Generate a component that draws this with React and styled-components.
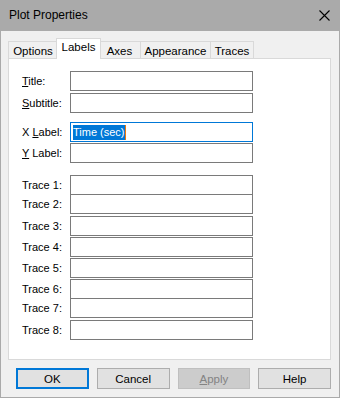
import React from 'react'
import styled, { createGlobalStyle } from 'styled-components'

const GlobalStyle = createGlobalStyle`
  html, body {
    margin: 0;
    padding: 0;
    background: #f0f0f0;
  }
  * {
    box-sizing: border-box;
  }
`

const fields = [
  { label: 'Title:', key: 'T', rest: 'itle:', space: 12 },
  { label: 'Subtitle:', key: 'S', rest: 'ubtitle:', space: 2 },
  { label: 'X Label:', pre: 'X ', key: 'L', rest: 'abel:', space: 9, value: 'Time (sec)' },
  { label: 'Y Label:', key: 'Y', rest: ' Label:', space: 1 },
]

const traces = [12, -1, 2, 1, 1, 1, -1, 2]

function App() {
  return (
    <Window>
      <GlobalStyle />
      <TitleBar>
        <span>Plot Properties</span>
        <svg width="11" height="11" viewBox="0 0 11 11">
          <path d="M0.5 0.5 L10.5 10.5 M10.5 0.5 L0.5 10.5" stroke="#000" strokeWidth="1.1" fill="none" />
        </svg>
      </TitleBar>

      <Body>
        <Tabs>
          <Tab w={50}>Options</Tab>
          <Tab w={41} active>Labels</Tab>
          <Tab w={42}>Axes</Tab>
          <Tab w={70}>Appearance</Tab>
          <Tab w={43}>Traces</Tab>
        </Tabs>

        <Panel>
          {fields.map((f) => (
            <Row key={f.label} space={f.space}>
              <Label>
                {f.pre}<u>{f.key}</u>{f.rest}
              </Label>
              <TextBox focused={!!f.value}>
                {f.value && (
                  <>
                    <Selected>{f.value}</Selected>
                    <Caret />
                  </>
                )}
              </TextBox>
            </Row>
          ))}

          {traces.map((s, i) => (
            <Row key={i} space={s}>
              <Label>Trace {i + 1}:</Label>
              <TextBox />
            </Row>
          ))}
        </Panel>

        <Buttons>
          <Button primary>OK</Button>
          <Button>Cancel</Button>
          <Button disabled><u>A</u>pply</Button>
          <Button>Help</Button>
        </Buttons>
      </Body>
    </Window>
  )
}

export default App

const Window = styled.div`
  width: 340px;
  height: 398px;
  border: 1px solid #aaaaaa;
  border-top: none;
  background: #f0f0f0;
  font-family: "Liberation Sans", Arial, sans-serif;
  font-size: 11px;
  color: #000;
  display: flex;
  flex-direction: column;
`

const TitleBar = styled.div`
  height: 31px;
  background: #aaaaaa;
  margin: 0 -1px;
  padding: 0 10px 1px 9px;
  display: flex;
  align-items: center;
  justify-content: space-between;
  font-size: 12px;
  color: #000;
`

const Body = styled.div`
  flex: 1;
  padding: 7px 8px 0 7px;
  display: flex;
  flex-direction: column;
`

const Tabs = styled.div`
  display: flex;
  align-items: flex-end;
  height: 21px;
  margin-bottom: -1px;
  position: relative;
  z-index: 1;
`

const Tab = styled.div`
  width: ${(p) => (p.active ? p.w + 4 : p.w)}px;
  height: ${(p) => (p.active ? 21 : 18)}px;
  margin: 0 ${(p) => (p.active ? -2 : 0)}px;
  padding-top: ${(p) => (p.active ? 0 : 1)}px;
  line-height: 17px;
  text-align: center;
  border: 1px solid #d9d9d9;
  border-bottom: ${(p) => (p.active ? 'none' : '1px solid #d9d9d9')};
  border-left: ${(p) => (p.active ? '1px solid #d9d9d9' : 'none')};
  background: ${(p) => (p.active ? '#ffffff' : '#f0f0f0')};
  position: relative;
  z-index: ${(p) => (p.active ? 2 : 0)};
  font-size: 11.5px;
  white-space: nowrap;

  &:first-child {
    border-left: 1px solid #d9d9d9;
  }
`

const Panel = styled.div`
  height: 302px;
  background: #ffffff;
  border: 1px solid #d9d9d9;
  padding: 0 0 0 13px;
  display: flex;
  flex-direction: column;
`

const Row = styled.div`
  display: flex;
  align-items: center;
  height: 20px;
  margin-top: ${(p) => p.space}px;
  position: relative;
`

const Label = styled.div`
  width: 48px;
  white-space: nowrap;

  u {
    text-decoration: underline;
    text-underline-offset: 1px;
  }
`

const TextBox = styled.div`
  width: 183px;
  height: 20px;
  border: 1px solid ${(p) => (p.focused ? '#0078d7' : '#7a7a7a')};
  background: #ffffff;
  padding: 1px 2px;
  display: flex;
  align-items: center;
`

const Selected = styled.span`
  background: #0078d7;
  color: #ffffff;
  line-height: 15px;
  height: 15px;
  white-space: nowrap;
`

const Caret = styled.span`
  width: 1px;
  height: 15px;
  background: #f0780a;
`

const Buttons = styled.div`
  display: flex;
  gap: 8px;
  padding: 8px 0 0 8px;
`

const Button = styled.div`
  width: 73px;
  height: 21px;
  display: flex;
  align-items: center;
  justify-content: center;
  background: ${(p) => (p.disabled ? '#cccccc' : '#e1e1e1')};
  border: ${(p) => (p.primary ? '2px solid #0078d7' : p.disabled ? '1px solid #bfbfbf' : '1px solid #adadad')};
  color: ${(p) => (p.disabled ? '#838383' : '#000000')};
  font-size: 11.5px;
`
